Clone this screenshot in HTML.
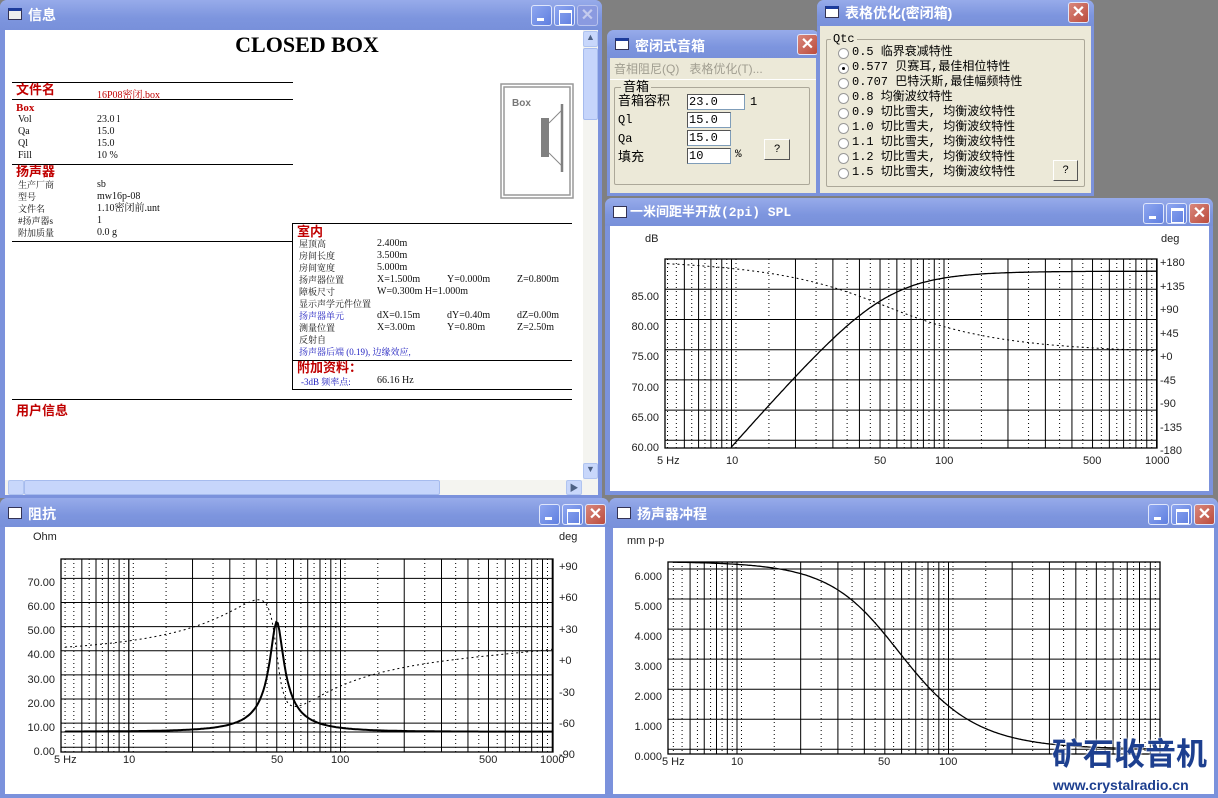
<!DOCTYPE html>
<html><head><meta charset="utf-8"><style>
*{margin:0;padding:0;box-sizing:border-box}
body{width:1218px;height:798px;background:#808080;position:relative;overflow:hidden;font-family:"Liberation Sans","Noto Sans CJK SC",sans-serif}
.a{position:absolute;white-space:nowrap}
.win{position:absolute;background:#7b92dc;border-radius:7px 7px 0 0}
.tb{position:absolute;left:0;right:0;top:0;border-radius:7px 7px 0 0;background:linear-gradient(#97abea,#7d95de 60%,#7890da)}
.tt{position:absolute;top:6px;left:28px;color:#fff;font-weight:bold;font-size:14px;line-height:18px;font-family:"Liberation Sans","Noto Sans CJK SC",sans-serif}
.ic{position:absolute;left:8px;top:8px;width:14px;height:12px;background:#fff;border:1px solid #335;}
.ic.d{border-top:3px solid #1d3c9c;background:#fff}
.btn{position:absolute;top:5px;width:21px;height:21px;border:1px solid #dfe6fb;border-radius:3px;background:linear-gradient(135deg,#8ea6f0,#5f7fe0)}
.btn.x{background:linear-gradient(135deg,#d9877c,#bb4c3d)}
.btn.xi{background:#8a9ae0;border-color:#b9c3ee}
.btn.mn::after{content:"";position:absolute;left:5px;bottom:4px;width:7px;height:3px;background:#fff}
.btn.mx::after{content:"";position:absolute;left:4px;top:4px;width:11px;height:11px;border:1px solid #fff;border-top:3px solid #fff}
.btn.x::after,.btn.xi::after{content:"✕";position:absolute;left:0;right:0;top:0;text-align:center;color:#fff;font-size:16px;line-height:19px;font-weight:bold}
.btn.xi::after{color:#c4cbee}
.cl{position:absolute;background:#fff}
.ser{font-family:"Liberation Serif","Noto Serif CJK SC",serif;font-size:10px;color:#111}
.red{color:#c00000;font-weight:bold;font-family:"Liberation Serif","Noto Sans CJK SC",serif;line-height:16px}
.hl{position:absolute;height:1px;background:#000}
.beige{position:absolute;background:#ece9d8}
.ss{font-family:"Liberation Mono","Noto Sans CJK SC",monospace;font-size:12px;color:#000}
.inp{position:absolute;background:#fff;border:1px solid #7f9db9;border-top-color:#555;border-left-color:#555;font-family:"Liberation Mono",monospace;font-size:12px;line-height:14px;padding-left:1px}
.qb{position:absolute;border:1px solid #fff;border-right-color:#555;border-bottom-color:#555;background:#ece9d8;font-size:11px;text-align:center}
.grp{position:absolute;border:1px solid #aca899;border-radius:2px}
.rd{position:absolute;width:11px;height:11px;border-radius:50%;background:#fff;border:1px solid #999}
.lab{font-size:11px;color:#222;font-family:"Liberation Sans",sans-serif}
.r{text-align:right}
</style></head><body>

<div class="win" style="left:0;top:0;width:602px;height:498px">
 <div class="tb" style="height:30px"></div>
 <div class="ic d" style="background:#eee"></div>
 <div class="tt">信息</div>
 <div class="btn mn" style="left:531px"></div><div class="btn mx" style="left:554px"></div><div class="btn xi" style="left:577px"></div>
 <div class="cl" style="left:5px;top:30px;width:578px;height:450px"></div>
 <div class="a" style="left:583px;top:30px;width:15px;height:450px;background:#f4f4f0"></div>
 <div class="a" style="left:583px;top:31px;width:15px;height:16px;background:#c8d7fb;border:1px solid #b0c4f0;border-radius:2px;font-size:9px;text-align:center;color:#4d6185">▲</div>
 <div class="a" style="left:583px;top:48px;width:15px;height:72px;background:#c6d5fb;border:1px solid #a6bbee;border-radius:2px"></div>
 <div class="a" style="left:583px;top:463px;width:15px;height:16px;background:#c8d7fb;border:1px solid #b0c4f0;border-radius:2px;font-size:9px;text-align:center;color:#4d6185">▼</div>
 <div class="a" style="left:5px;top:480px;width:593px;height:15px;background:#f4f4f0"></div>
 <div class="a" style="left:8px;top:480px;width:16px;height:15px;background:#c8d7fb;border:1px solid #b0c4f0;border-radius:2px"></div>
 <div class="a" style="left:24px;top:480px;width:416px;height:15px;background:#c6d5fb;border:1px solid #a6bbee;border-radius:2px"></div>
 <div class="a" style="left:566px;top:480px;width:16px;height:15px;background:#c8d7fb;border:1px solid #b0c4f0;border-radius:2px;font-size:9px;text-align:center;color:#4d6185">▶</div>

 <div class="a" style="left:0;width:614px;top:32px;text-align:center;font:bold 22px 'Liberation Serif',serif">CLOSED BOX</div>
 <div class="hl" style="left:12px;top:82px;width:281px"></div>
 <div class="a red" style="left:16px;top:82px;font-size:13px">文件名</div>
 <div class="a ser" style="left:97px;top:86px;color:#c00000">16P08密闭.box</div>
 <div class="hl" style="left:12px;top:99px;width:281px"></div>
 <div class="a red" style="left:16px;top:100px;font-size:11px">Box</div>
 <div class="a ser" style="left:18px;top:114px;line-height:12px">Vol<br>Qa<br>Ql<br>Fill</div>
 <div class="a ser" style="left:97px;top:114px;line-height:12px">23.0 l<br>15.0<br>15.0<br>10 %</div>
 <div class="hl" style="left:12px;top:164px;width:281px"></div>
 <div class="a red" style="left:16px;top:164px;font-size:13px">扬声器</div>
 <div class="a ser" style="left:18px;top:179px;line-height:12px;font-size:9px">生产厂商<br>型号<br>文件名<br>#扬声器s<br>附加质量</div>
 <div class="a ser" style="left:97px;top:179px;line-height:12px">sb<br>mw16p-08<br>1.10密闭前.unt<br>1<br>0.0 g</div>
 <div class="hl" style="left:12px;top:241px;width:281px"></div>

 <svg class="a" style="left:500px;top:83px" width="74" height="116">
  <rect x="1" y="1" width="72" height="114" fill="none" stroke="#999" stroke-width="1.5"/>
  <rect x="4" y="4" width="66" height="108" fill="none" stroke="#999" stroke-width="1.5"/>
  <text x="12" y="23" font-family="Liberation Sans" font-weight="bold" font-size="10" fill="#777">Box</text>
  <rect x="41" y="35" width="8" height="39" fill="#808080"/>
  <line x1="49" y1="40" x2="62" y2="27" stroke="#888"/>
  <line x1="49" y1="70" x2="62" y2="83" stroke="#888"/>
  <line x1="62" y1="21" x2="62" y2="89" stroke="#808080" stroke-width="2.5"/>
 </svg>

 <div class="hl" style="left:293px;top:223px;width:279px"></div>
 <div class="a" style="left:292px;top:223px;width:1px;height:167px;background:#000"></div>
 <div class="a red" style="left:297px;top:224px;font-size:13px">室内</div>
 <div class="a ser" style="left:299px;top:238px;line-height:12px;font-size:9px">屋顶高<br>房间长度<br>房间宽度<br>扬声器位置<br>障板尺寸<br>显示声学元件位置<br><span style="color:#2020c0">扬声器单元</span><br>测量位置<br>反射自<br><span style="color:#2020c0">扬声器后端 (0.19), 边缘效应,</span></div>
 <div class="a ser" style="left:377px;top:238px;line-height:12px">2.400m<br>3.500m<br>5.000m<br>X=1.500m<br>W=0.300m H=1.000m<br>&nbsp;<br>dX=0.15m<br>X=3.00m</div>
 <div class="a ser" style="left:447px;top:274px;line-height:12px">Y=0.000m<br><br><br>dY=0.40m<br>Y=0.80m</div>
 <div class="a ser" style="left:517px;top:274px;line-height:12px">Z=0.800m<br><br><br>dZ=0.00m<br>Z=2.50m</div>
 <div class="hl" style="left:293px;top:360px;width:279px"></div>
 <div class="a red" style="left:297px;top:360px;font-size:13px">附加资料：</div>
 <div class="a ser" style="left:301px;top:375px;color:#2020c0;font-size:9px">-3dB 频率点:</div>
 <div class="a ser" style="left:377px;top:375px">66.16 Hz</div>
 <div class="hl" style="left:293px;top:389px;width:279px"></div>
 <div class="hl" style="left:12px;top:399px;width:560px"></div>
 <div class="a red" style="left:16px;top:403px;font-size:13px">用户信息</div>
</div>

<div class="win" style="left:607px;top:30px;width:212px;height:166px">
 <div class="tb" style="height:28px"></div>
 <div class="ic d"></div>
 <div class="tt" style="top:7px">密闭式音箱</div>
 <div class="btn x" style="left:190px;top:4px"></div>
 <div class="beige" style="left:3px;top:28px;width:206px;height:135px"></div>
 <div class="a" style="left:7px;top:31px;font-size:12px;line-height:16px;color:#a09d90">音相阻尼(Q)&nbsp;&nbsp; 表格优化(T)...</div>
 <div class="a" style="left:3px;top:49px;width:206px;height:1px;background:#fff"></div>
 <div class="grp" style="left:7px;top:57px;width:196px;height:98px"></div>
 <div class="a" style="left:14px;top:50px;background:#ece9d8;font-size:13px;line-height:14px;padding:0 2px">音箱</div>
 <div class="a" style="left:11px;top:62px;font-size:13px;line-height:18px">音箱容积<br><span class="ss">Ql</span><br><span class="ss">Qa</span><br>填充</div>
 <div class="inp" style="left:80px;top:64px;width:58px;height:16px">23.0</div>
 <div class="a ss" style="left:143px;top:65px">1</div>
 <div class="inp" style="left:80px;top:82px;width:44px;height:16px">15.0</div>
 <div class="inp" style="left:80px;top:100px;width:44px;height:16px">15.0</div>
 <div class="inp" style="left:80px;top:118px;width:44px;height:16px">10</div>
 <div class="a ss" style="left:128px;top:119px;font-size:11px">%</div>
 <div class="qb" style="left:157px;top:109px;width:26px;height:21px;line-height:19px">?</div>
</div>

<div class="win" style="left:817px;top:0;width:277px;height:196px">
 <div class="tb" style="height:26px"></div>
 <div class="ic d" style="top:6px"></div>
 <div class="tt" style="top:4px">表格优化(密闭箱)</div>
 <div class="btn x" style="left:251px;top:2px"></div>
 <div class="beige" style="left:3px;top:26px;width:271px;height:167px"></div>
 <div class="grp" style="left:9px;top:39px;width:259px;height:148px"></div>
 <div class="a ss" style="left:14px;top:32px;background:#ece9d8;padding:0 2px">Qtc</div>
 <div class="a" style="left:35px;top:45px;font-size:12px;line-height:15px;font-family:'Liberation Mono','Noto Sans CJK SC',monospace">0.5 临界衰减特性<br>0.577 贝赛耳,最佳相位特性<br>0.707 巴特沃斯,最佳幅频特性<br>0.8 均衡波纹特性<br>0.9 切比雪夫, 均衡波纹特性<br>1.0 切比雪夫, 均衡波纹特性<br>1.1 切比雪夫, 均衡波纹特性<br>1.2 切比雪夫, 均衡波纹特性<br>1.5 切比雪夫, 均衡波纹特性</div>
 <div class="rd" style="left:21px;top:48px"></div><div class="rd" style="left:21px;top:63px"><div style="position:absolute;left:3px;top:3px;width:3px;height:3px;background:#000;border-radius:50%"></div></div>
 <div class="rd" style="left:21px;top:78px"></div><div class="rd" style="left:21px;top:93px"></div><div class="rd" style="left:21px;top:108px"></div><div class="rd" style="left:21px;top:123px"></div><div class="rd" style="left:21px;top:138px"></div><div class="rd" style="left:21px;top:153px"></div><div class="rd" style="left:21px;top:168px"></div>
 <div class="qb" style="left:236px;top:160px;width:25px;height:21px;line-height:19px">?</div>
</div>

<div class="win" style="left:605px;top:198px;width:608px;height:297px">
 <div class="tb" style="height:28px"></div>
 <div class="ic" style="top:8px"></div>
 <div class="tt" style="top:6px;left:25px;font-family:'Liberation Mono','Noto Sans CJK SC',monospace;font-size:13px">一米间距半开放(2pi) SPL</div>
 <div class="btn mn" style="left:538px"></div><div class="btn mx" style="left:561px"></div><div class="btn x" style="left:584px"></div>
 <div class="cl" style="left:5px;top:28px;width:599px;height:265px"></div>
</div>
<div class="win" style="left:0;top:498px;width:609px;height:300px">
 <div class="tb" style="height:29px"></div>
 <div class="ic" style="top:9px"></div>
 <div class="tt" style="top:7px">阻抗</div>
 <div class="btn mn" style="left:539px;top:6px"></div><div class="btn mx" style="left:562px;top:6px"></div><div class="btn x" style="left:585px;top:6px"></div>
 <div class="cl" style="left:5px;top:29px;width:600px;height:267px"></div>
</div>
<div class="win" style="left:609px;top:498px;width:609px;height:300px">
 <div class="tb" style="height:30px"></div>
 <div class="ic" style="top:9px"></div>
 <div class="tt" style="top:7px">扬声器冲程</div>
 <div class="btn mn" style="left:539px;top:6px"></div><div class="btn mx" style="left:562px;top:6px"></div><div class="btn x" style="left:585px;top:6px"></div>
 <div class="cl" style="left:4px;top:30px;width:601px;height:266px"></div>
</div>

<svg id="g" class="a" style="left:0;top:0" width="1218" height="798"></svg>

<div class="a lab" style="left:645px;top:233px">dB</div>
<div class="a lab" style="left:1161px;top:233px">deg</div>
<div class="a lab r" style="left:610px;width:49px;top:282px;line-height:30.2px">85.00<br>80.00<br>75.00<br>70.00<br>65.00<br>60.00</div>
<div class="a lab" style="left:1160px;top:252px;line-height:23.55px">+180<br>+135<br>+90<br>+45<br>+0<br>-45<br>-90<br>-135<br>-180</div>
<div class="a lab" style="left:657px;top:455px">5 Hz</div>
<div class="a lab" style="left:726px;top:455px">10</div>
<div class="a lab" style="left:874px;top:455px">50</div>
<div class="a lab" style="left:935px;top:455px">100</div>
<div class="a lab" style="left:1083px;top:455px">500</div>
<div class="a lab" style="left:1145px;top:455px">1000</div>
<div class="a lab" style="left:33px;top:531px">Ohm</div>
<div class="a lab" style="left:559px;top:531px">deg</div>
<div class="a lab r" style="left:5px;width:50px;top:571px;line-height:24.14px">70.00<br>60.00<br>50.00<br>40.00<br>30.00<br>20.00<br>10.00<br>0.00</div>
<div class="a lab" style="left:559px;top:552px;line-height:31.4px">+90<br>+60<br>+30<br>+0<br>-30<br>-60<br>-90</div>
<div class="a lab" style="left:54px;top:754px">5 Hz</div>
<div class="a lab" style="left:123px;top:754px">10</div>
<div class="a lab" style="left:271px;top:754px">50</div>
<div class="a lab" style="left:331px;top:754px">100</div>
<div class="a lab" style="left:479px;top:754px">500</div>
<div class="a lab" style="left:540px;top:754px">1000</div>
<div class="a lab" style="left:627px;top:535px">mm p-p</div>
<div class="a lab r" style="left:610px;width:52px;top:562px;line-height:30.05px">6.000<br>5.000<br>4.000<br>3.000<br>2.000<br>1.000<br>0.000</div>
<div class="a lab" style="left:662px;top:756px">5 Hz</div>
<div class="a lab" style="left:731px;top:756px">10</div>
<div class="a lab" style="left:878px;top:756px">50</div>
<div class="a lab" style="left:939px;top:756px">100</div>

<div class="a" style="left:1052px;top:733px;font:bold 31px/38px 'Noto Sans CJK SC',sans-serif;color:#1d3f8f;letter-spacing:0;text-shadow:0 0 2px #fff,0 0 2px #fff">矿石收音机</div>
<div class="a" style="left:1053px;top:776px;font:bold 14px/18px 'Liberation Sans',sans-serif;color:#1d3f8f;text-shadow:0 0 2px #fff">www.crystalradio.cn</div>

<script>
var S=[];
function ln(a,b,c,d,dot){S.push('<line x1="'+a+'" y1="'+b+'" x2="'+c+'" y2="'+d+'" stroke="#000" stroke-width="1"'+(dot?' stroke-dasharray="1 3"':'')+'/>');}
function lg(f){return Math.log(f)/Math.LN10;}
function chart(o){
 var xf=function(f){return o.x0+(lg(f)-2)*o.dec;};
 S.push('<rect x="'+o.L+'" y="'+o.T+'" width="'+(o.R-o.L)+'" height="'+(o.B-o.T)+'" fill="none" stroke="#000" stroke-width="1.3"/>');
 var decs=[1,10,100];
 for(var i=0;i<3;i++){var d=decs[i];
  for(var k=1;k<=10;k++){var f=k*d;
   if(f>=6&&f<=1000){var x=xf(f);if(x>o.L&&x<o.R)ln(x,o.T,x,o.B,false);}
   var h=(k+0.5)*d; if(h>=5&&h<1000){var x2=xf(h);if(x2>o.L&&x2<o.R)ln(x2,o.T,x2,o.B,true);}
  }}
 ln(xf(5),o.T,xf(5),o.B,true);
 o.h.forEach(function(y){ln(o.L,y,o.R,y,false);});
 o.c.forEach(function(c){
  var p=[];for(var j=0;j<=300;j++){var f=5*Math.pow(200,j/300);var y=c.fn(f);if(y<=o.B&&y>=o.T)p.push(xf(f).toFixed(1)+','+y.toFixed(1));}
  S.push('<polyline fill="none" stroke="#000" stroke-width="'+c.w+'"'+(c.dot?' stroke-dasharray="2 3"':'')+' points="'+p.join(' ')+'"/>');
 });
}
function hp(f){var x=f/53,Q=0.6;var re=1-x*x,im=x/Q;return {m:x*x/Math.sqrt(re*re+im*im),ph:180-Math.atan2(im,re)*180/Math.PI};}
var sh=[];for(var v=60;v<=85;v+=5)sh.push(440.3-(v-60)*6.04);
chart({L:665,R:1157,T:259,B:448,x0:944,dec:212.5,h:sh,c:[
 {w:1.3,fn:function(f){return 440.3-(88+20*lg(hp(f).m)-60)*6.04;}},
 {w:1,dot:1,fn:function(f){return 259+(180-hp(f).ph)/360*188.4;}}]});
function Z(f){var X=7*(f/50-50/f);var d=1+X*X;var re=6.5+45.5/d,im=-45.5*X/d+2*Math.PI*f*0.00012;return {m:Math.sqrt(re*re+im*im),ph:Math.atan2(im,re)*180/Math.PI};}
var zh=[];for(var v=0;v<=70;v+=10)zh.push(747.3-v*2.414);zh.push(732);
chart({L:61,R:553,T:559,B:752,x0:340.5,dec:211.7,h:zh,c:[
 {w:2,fn:function(f){return 747.3-Z(f).m*2.414;}},
 {w:1,dot:1,fn:function(f){return 653.2-Z(f).ph*1.046;}}]});
function ex(f){var x=f/51,Q=0.6;var re=1-x*x,im=x/Q;return 6.25/Math.sqrt(re*re+im*im);}
var eh=[];for(var v=0;v<=6;v++)eh.push(749.3-v*30.05);
chart({L:668,R:1160,T:562,B:754,x0:948.5,dec:211.5,h:eh,c:[
 {w:1.3,fn:function(f){return 749.3-ex(f)*30.05;}}]});
document.getElementById('g').innerHTML=S.join('');
</script>
</body></html>
